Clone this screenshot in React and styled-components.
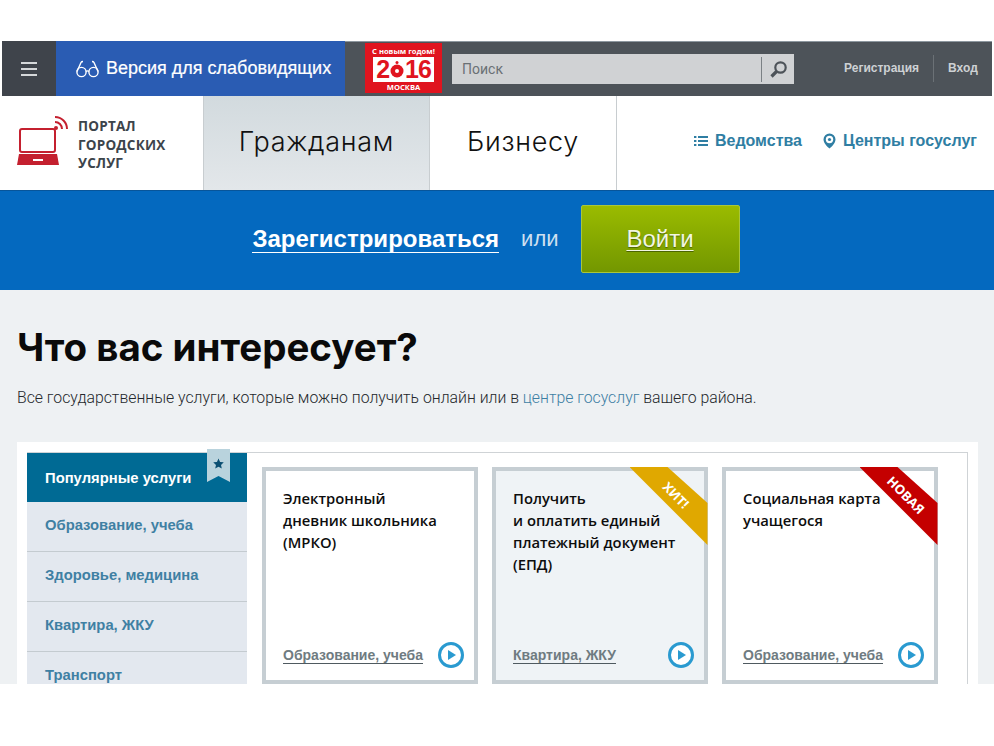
import React from 'react';
import styled, { createGlobalStyle } from 'styled-components';

const Global = createGlobalStyle`
html, body { margin: 0; padding: 0; background: #fff; }
* { box-sizing: border-box; }
`;

const Page = styled.div`
height: 684px;
overflow: hidden;
padding-top: 41px;
background: #fff;
font-family: "Liberation Sans", Arial, sans-serif;
`;

const TopBar = styled.div`
display: flex;
align-items: stretch;
height: 55px;
margin: 0 2px;
background: #4d5359;
box-shadow: inset 0 1px 0 #8d979f;
`;
const Burger = styled.div`
width: 54px;
background: #3f444b;
display: flex;
flex-direction: column;
justify-content: center;
align-items: center;
gap: 4px;
span { display: block; width: 16px; height: 2px; background: #d5d8da; }
`;
const EyeLink = styled.div`
width: 289px;
background: #2a5cb3;
color: #fff;
display: flex;
align-items: center;
padding-left: 20px;
gap: 7px;
font-size: 18px;
-webkit-text-stroke: 0.2px #fff;
`;
const Promo = styled.div`
width: 77px;
height: 50px;
margin: 2px 10px 0 20px;
background: #e0141f;
color: #fff;
display: flex;
flex-direction: column;
align-items: center;
font-family: "Open Sans", sans-serif;
font-weight: 700;
font-size: 7.6px;
line-height: 9px;
padding-top: 4px;
white-space: nowrap;
`;
const PromoYear = styled.div`
width: 61px;
height: 25px;
margin: 1px 0 1px;
background: #fff;
color: #e0141f;
display: flex;
justify-content: center;
align-items: center;
font-family: "Liberation Sans", sans-serif;
font-size: 25px;
line-height: 25px;
font-weight: 700;
letter-spacing: -1px;
`;
const SearchBox = styled.div`
width: 342px;
height: 30px;
margin-top: 13px;
background: #d0d2d4;
display: flex;
align-items: center;
padding-left: 10px;
font-size: 14px;
color: #6a7074;
font-family: "Roboto", sans-serif;
`;
const SearchText = styled.span`
flex: 1;
`;
const SearchButton = styled.div`
width: 33px;
height: 25px;
border-left: 1px solid #7b8185;
display: flex;
align-items: center;
justify-content: center;
color: #4d5359;
`;
const AuthLinks = styled.div`
display: flex;
align-items: center;
margin-left: 50px;
font-size: 12px;
font-weight: 700;
color: #cdd1d4;
`;
const AuthItem = styled.span`
padding-right: ${p => (p.$divided ? '14px' : '0')};
margin-right: ${p => (p.$divided ? '14px' : '0')};
height: 27px;
line-height: 27px;
border-right: ${p => (p.$divided ? '1px solid #6b7176' : 'none')};
`;

const MainNav = styled.div`
display: flex;
height: 94px;
background: #fff;
`;
const Logo = styled.div`
width: 203px;
display: flex;
padding: 18px 0 0 14px;
gap: 8px;
`;
const LogoText = styled.div`
font-size: 13.5px;
line-height: 18.5px;
font-weight: 700;
color: #3c444b;
letter-spacing: 0.2px;
padding-top: 3px;
font-family: "Open Sans", sans-serif;
`;
const Tab = styled.div`
width: ${p => p.$width}px;
display: flex;
align-items: center;
justify-content: center;
padding-bottom: 3px;
font-family: "Inter", sans-serif;
font-weight: 300;
font-size: 27px;
letter-spacing: 0.7px;
color: #111;
background: ${p => (p.$active ? 'linear-gradient(#d2dade, #e3e7ea)' : '#fff')};
border-left: ${p => (p.$active ? '1px solid #c8cdd0' : 'none')};
border-right: 1px solid #c8cdd0;
`;
const NavLinks = styled.div`
flex: 1;
display: flex;
justify-content: flex-end;
align-items: center;
gap: 21px;
padding: 0 17px 5px 0;
font-size: 16px;
font-weight: 700;
color: #2f7ea3;
`;
const NavLink = styled.span`
display: flex;
align-items: center;
gap: 7px;
`;

const Banner = styled.div`
height: 100px;
background: #0469bf;
border-top: 1px solid #07559a;
display: flex;
align-items: center;
justify-content: center;
padding: 0 2px 3px 0;
`;
const Register = styled.span`
font-size: 24px;
line-height: 26px;
font-weight: 700;
color: #fff;
border-bottom: 1px solid #fff;
`;
const Or = styled.span`
margin: 0 22px;
font-size: 22px;
color: #cfe0f0;
`;
const LoginButton = styled.div`
width: 159px;
height: 68px;
border: 1px solid #a9c63a;
border-radius: 2px;
background: linear-gradient(#9abb00, #739700);
display: flex;
align-items: center;
justify-content: center;
span {
  font-size: 24px;
  color: #f2f6e2;
  text-decoration: underline;
  text-underline-offset: 3px;
  text-decoration-thickness: 1px;
  text-shadow: 0 1px 1px #4d6600;
}
`;

const Content = styled.div`
background: #eef1f3;
padding: 33px 16px 0 17px;
`;
const Title = styled.h1`
margin: 0;
font-family: "Inter", sans-serif;
font-size: 38.5px;
line-height: 48px;
font-weight: 700;
color: #0a0a0a;
`;
const Lead = styled.p`
margin: 17px 0 0;
font-family: "Roboto", sans-serif;
font-size: 15.8px;
font-weight: 300;
line-height: 20px;
color: #24282c;
a { color: #3d7fa3; text-decoration: none; }
`;
const Panel = styled.div`
margin-top: 34px;
background: #fff;
padding: 10px 10px 0;
`;
const Frame = styled.div`
display: flex;
border-top: 1px solid #cfd3d6;
border-right: 1px solid #cfd3d6;
height: 300px;
`;
const Sidebar = styled.div`
width: 220px;
flex-shrink: 0;
`;
const SideItem = styled.div`
position: relative;
height: ${p => (p.$active ? '49px' : '50px')};
display: flex;
align-items: center;
padding-left: 18px;
padding-bottom: ${p => (p.$active ? '0' : '4px')};
font-size: 14.8px;
font-weight: 700;
color: ${p => (p.$active ? '#fff' : '#3f80a3')};
background: ${p => (p.$active ? '#006a94' : '#e3e8ef')};
border-bottom: ${p => (p.$active ? 'none' : '1px solid #c4cbd0')};
`;
const Bookmark = styled.div`
position: absolute;
top: -4px;
right: 17px;
width: 23px;
height: 33px;
background: #b9d3dd;
clip-path: polygon(0 0, 100% 0, 100% 100%, 50% 82%, 0 100%);
display: flex;
justify-content: center;
padding-top: 9px;
color: #0b4f72;
`;
const Cards = styled.div`
flex: 1;
display: flex;
gap: 14.5px;
padding: 14px 0 0 15px;
`;
const Card = styled.div`
position: relative;
width: 215.5px;
height: 217px;
flex-shrink: 0;
border: 4px solid #c6ced3;
background: ${p => (p.$tint ? '#eff3f6' : '#fff')};
padding: 16px 16px 0 17px;
display: flex;
flex-direction: column;
`;
const CardTitle = styled.div`
font-family: "Open Sans", sans-serif;
font-size: 14.8px;
line-height: 22px;
font-weight: 600;
color: #0d0d0d;
white-space: pre-line;
flex: 1;
`;
const CardFoot = styled.div`
display: flex;
align-items: center;
justify-content: space-between;
margin: 0 -6px 12px 0;
`;
const Category = styled.span`
font-size: 14px;
line-height: 16px;
font-weight: 700;
color: #6f7b81;
border-bottom: 1px solid #4f5a60;
`;
const Ribbon = styled.div`
position: absolute;
top: -4px;
right: -4px;
width: 78px;
height: 78px;
background: ${p => p.$color};
clip-path: polygon(0 0, 38px 0, 78px 36px, 78px 78px);
`;
const RibbonText = styled.span`
position: absolute;
left: 46px;
top: 28px;
transform: translate(-50%, -50%) rotate(45deg);
color: #fff;
font-family: "Open Sans", sans-serif;
font-size: 13px;
font-weight: 700;
white-space: nowrap;
`;

const GlassesIcon = () => (
  <svg width="23" height="18" viewBox="0 0 23 18" fill="none" stroke="#fff" strokeWidth="1.4">
    <circle cx="5.5" cy="12" r="4.6" />
    <circle cx="17.5" cy="12" r="4.6" />
    <path d="M10 11.5q1.5-1.2 3 0" />
    <path d="M1 11.5L5 2.5q.5-1 2-1" />
    <path d="M22 11.5L18 2.5q-.5-1-2-1" />
  </svg>
);

const SearchIcon = () => (
  <svg width="19" height="19" viewBox="0 0 19 19" fill="none" stroke="currentColor">
    <circle cx="11.5" cy="7.5" r="5.2" strokeWidth="2.2" />
    <path d="M7.5 11.5L2.5 16.5" strokeWidth="3.2" />
  </svg>
);

const LaptopIcon = () => (
  <svg width="56" height="54" viewBox="0 0 56 54">
    <rect x="6" y="15" width="35" height="23" rx="2" fill="none" stroke="#c4202f" strokeWidth="2" />
    <path d="M5 40h38l2 11H3z" fill="#c4202f" />
    <rect x="19" y="45" width="10" height="2" fill="#fff" />
    <circle cx="42" cy="14" r="2" fill="#c4202f" />
    <path d="M41 8a7 7 0 0 1 7 7" fill="none" stroke="#c4202f" strokeWidth="2" />
    <path d="M41 3a12 12 0 0 1 12 12" fill="none" stroke="#c4202f" strokeWidth="2" />
  </svg>
);

const SunIcon = () => (
  <svg width="16" height="20" viewBox="0 0 16 20">
    <circle cx="8" cy="11" r="6.500" fill="#e0141f" />
    <circle cx="8" cy="11" r="2" fill="#fff" />
    <circle cx="8" cy="2.500" r="1.500" fill="#e0141f" />
  </svg>
);

const ListIcon = () => (
  <svg width="14" height="12" viewBox="0 0 14 12" fill="currentColor">
    <rect x="0" y="1" width="2.4" height="2" />
    <rect x="0" y="5" width="2.4" height="2" />
    <rect x="0" y="9" width="2.4" height="2" />
    <rect x="4" y="1" width="10" height="2" />
    <rect x="4" y="5" width="10" height="2" />
    <rect x="4" y="9" width="10" height="2" />
  </svg>
);

const PinIcon = () => (
  <svg width="13" height="16" viewBox="0 0 13 16">
    <path d="M6.5 0.5a6 6 0 0 0-6 6c0 3.6 4 7.6 6 9 2-1.4 6-5.400 6-9a6 6 0 0 0-6-6z" fill="currentColor" />
    <circle cx="6.500" cy="6.500" r="3.700" fill="#fff" />
    <circle cx="6.500" cy="6.500" r="1.600" fill="currentColor" />
  </svg>
);

const PlayIcon = () => (
  <svg width="26" height="26" viewBox="0 0 26 26">
    <circle cx="13" cy="13" r="11.5" fill="#fff" stroke="#2a9ad0" strokeWidth="3" />
    <path d="M10 8l8 5-8 5z" fill="#2a9ad0" />
  </svg>
);

const StarIcon = () => (
  <svg width="11" height="11" viewBox="0 0 24 24">
    <path d="M12 1l3.400 7.600 8.100.9-6 5.500 1.700 8L12 18.900 4.800 23l1.700-8-6-5.500 8.100-.9z" fill="currentColor" />
  </svg>
);

const sideItems = ['Образование, учеба', 'Здоровье, медицина', 'Квартира, ЖКУ', 'Транспорт'];

const cards = [
  { title: 'Электронный\nдневник школьника\n(МРКО)', category: 'Образование, учеба' },
  { title: 'Получить\nи оплатить единый\nплатежный документ\n(ЕПД)', category: 'Квартира, ЖКУ', tint: true, ribbon: 'ХИТ!', color: '#e0a800' },
  { title: 'Социальная карта\nучащегося', category: 'Образование, учеба', ribbon: 'НОВАЯ', color: '#c40000' },
];

const App = () => (
  <Page>
    <Global />
    <TopBar>
      <Burger><span /><span /><span /></Burger>
      <EyeLink><GlassesIcon />Версия для слабовидящих</EyeLink>
      <Promo>
        С новым годом!
        <PromoYear>2<SunIcon />16</PromoYear>
        МОСКВА
      </Promo>
      <SearchBox>
        <SearchText>Поиск</SearchText>
        <SearchButton><SearchIcon /></SearchButton>
      </SearchBox>
      <AuthLinks>
        <AuthItem $divided>Регистрация</AuthItem>
        <AuthItem>Вход</AuthItem>
      </AuthLinks>
    </TopBar>
    <MainNav>
      <Logo>
        <LaptopIcon />
        <LogoText>ПОРТАЛ<br />ГОРОДСКИХ<br />УСЛУГ</LogoText>
      </Logo>
      <Tab $width={227} $active>Гражданам</Tab>
      <Tab $width={187}>Бизнесу</Tab>
      <NavLinks>
        <NavLink><ListIcon />Ведомства</NavLink>
        <NavLink><PinIcon />Центры госуслуг</NavLink>
      </NavLinks>
    </MainNav>
    <Banner>
      <Register>Зарегистрироваться</Register>
      <Or>или</Or>
      <LoginButton><span>Войти</span></LoginButton>
    </Banner>
    <Content>
      <Title>Что вас интересует?</Title>
      <Lead>Все государственные услуги, которые можно получить онлайн или в <a>центре госуслуг</a> вашего района.</Lead>
      <Panel>
        <Frame>
          <Sidebar>
            <SideItem $active>Популярные услуги<Bookmark><StarIcon /></Bookmark></SideItem>
            {sideItems.map((item) => <SideItem key={item}>{item}</SideItem>)}
          </Sidebar>
          <Cards>
            {cards.map((card) => (
              <Card key={card.title} $tint={card.tint}>
                <CardTitle>{card.title}</CardTitle>
                <CardFoot>
                  <Category>{card.category}</Category>
                  <PlayIcon />
                </CardFoot>
                {card.ribbon && <Ribbon $color={card.color}><RibbonText>{card.ribbon}</RibbonText></Ribbon>}
              </Card>
            ))}
          </Cards>
        </Frame>
      </Panel>
    </Content>
  </Page>
);

export default App;
